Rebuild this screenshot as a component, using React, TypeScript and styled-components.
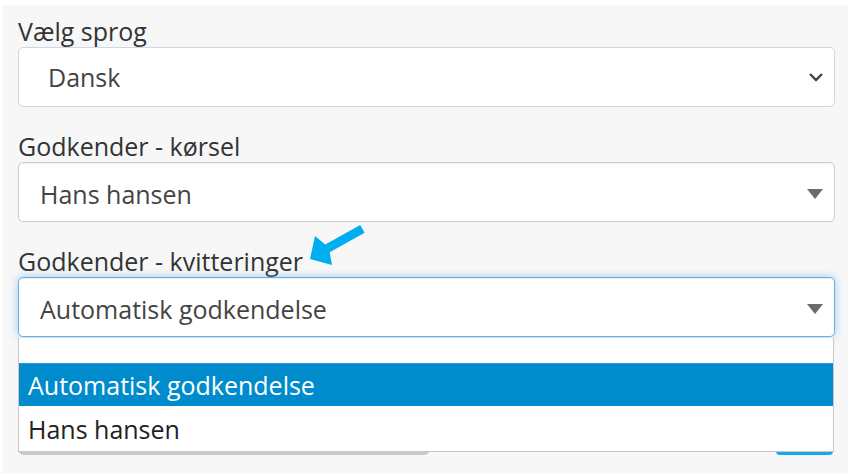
import styled, { createGlobalStyle } from 'styled-components';

const GlobalStyle = createGlobalStyle`
  html, body {
    margin: 0;
    padding: 0;
    background: #fff;
  }
  body {
    font-family: "Open Sans", "Noto Sans", sans-serif;
    color: #333;
    overflow: hidden;
  }
`;

const Panel = styled.div`
  margin: 5px 0 0 2px;
  height: 468px;
  background: #f7f7f7;
  padding: 12px 13px 0 16px;
  box-sizing: border-box;
`;

const Field = styled.div`
  margin-bottom: 25px;
`;

const Label = styled.div`
  font-size: 25px;
  line-height: 28px;
  color: #333;
  margin-bottom: 2px;
`;

const LabelText = styled.span`
  position: relative;
  display: inline-block;
`;

const Callout = styled.svg`
  position: absolute;
  left: calc(100% + 5px);
  top: -31px;
`;

const SelectWrap = styled.div`
  position: relative;
`;

const Select = styled.div<{ $variant: 'native' | 'plain' | 'focus'; $indent: number }>`
  height: 60px;
  box-sizing: border-box;
  display: flex;
  align-items: center;
  justify-content: space-between;
  padding: ${({ $variant }) => ($variant === 'native' ? '0' : '4px')} 10px 0 ${({ $indent }) => $indent}px;
  background: #fff;
  border-radius: 5px;
  font-size: 25px;
  color: #444;
  border: 1px solid
    ${({ $variant }) =>
      $variant === 'native' ? '#c9d8ea' : $variant === 'focus' ? '#66afe9' : '#cccccc'};
  box-shadow: ${({ $variant }) =>
    $variant === 'focus'
      ? 'inset 0 1px 1px rgba(0,0,0,.075), 0 0 8px rgba(102,175,233,.6)'
      : $variant === 'plain'
        ? 'inset 0 1px 1px rgba(0,0,0,.06)'
        : 'none'};
`;

const Menu = styled.ul`
  position: absolute;
  z-index: 5;
  top: calc(100% + 1px);
  left: 0;
  width: calc(100% - 1px);
  margin: 0;
  padding: 25px 0 0;
  list-style: none;
  background: #fff;
  border: 1px solid #c8c8c8;
  border-top: none;
  box-sizing: border-box;
`;

const Option = styled.li<{ $active?: boolean }>`
  height: ${({ $active }) => ($active ? '43px' : '45px')};
  box-sizing: border-box;
  display: flex;
  align-items: center;
  padding: 0 0 0 9px;
  font-size: 25px;
  color: ${({ $active }) => ($active ? '#fff' : '#222')};
  background: ${({ $active }) => ($active ? '#008ccc' : '#fff')};
  border-top: ${({ $active }) => ($active ? '1px solid #2f9ad6' : 'none')};
`;

const NextRow = styled.div`
  display: flex;
  justify-content: space-between;
  align-items: flex-end;
  margin-top: 78px;
  padding-right: 2px;
`;

const Input = styled.div`
  width: 412px;
  height: 40px;
  background: #fff;
  border: 1px solid #c8c8c8;
  border-bottom-width: 3px;
  border-radius: 0 0 6px 6px;
  box-sizing: border-box;
`;

const Button = styled.div`
  width: 57px;
  height: 40px;
  background: #12a7ee;
  border-radius: 0 0 4px 4px;
`;

function Chevron() {
  return (
    <svg width="16" height="10" viewBox="0 0 16 10">
      <polyline points="2,2 8,8 14,2" fill="none" stroke="#444" strokeWidth="2.4" />
    </svg>
  );
}

function Caret() {
  return (
    <svg width="18" height="12" viewBox="0 0 18 12">
      <polygon points="1,1 17,1 9,11" fill="#6b6b6b" />
    </svg>
  );
}

export default function App() {
  return (
    <>
      <GlobalStyle />
      <Panel>
        <Field>
          <Label>Vælg sprog</Label>
          <Select $variant="native" $indent={29}>
            <span>Dansk</span>
            <Chevron />
          </Select>
        </Field>

        <Field>
          <Label>Godkender - kørsel</Label>
          <Select $variant="plain" $indent={21}>
            <span>Hans hansen</span>
            <Caret />
          </Select>
        </Field>

        <Field>
          <Label>
            <LabelText>
              Godkender - kvitteringer
              <Callout width="62" height="52" viewBox="0 0 62 52">
                <polygon
                  points="2,43 7,20 17.3,28.4 52.2,8.9 56.6,16.7 21.7,36.2 24,49"
                  fill="#00aeef"
                />
              </Callout>
            </LabelText>
          </Label>
          <SelectWrap>
            <Select $variant="focus" $indent={21}>
              <span>Automatisk godkendelse</span>
              <Caret />
            </Select>
            <Menu>
              <Option $active>Automatisk godkendelse</Option>
              <Option>Hans hansen</Option>
            </Menu>
          </SelectWrap>
          <NextRow>
            <Input />
            <Button />
          </NextRow>
        </Field>
      </Panel>
    </>
  );
}
